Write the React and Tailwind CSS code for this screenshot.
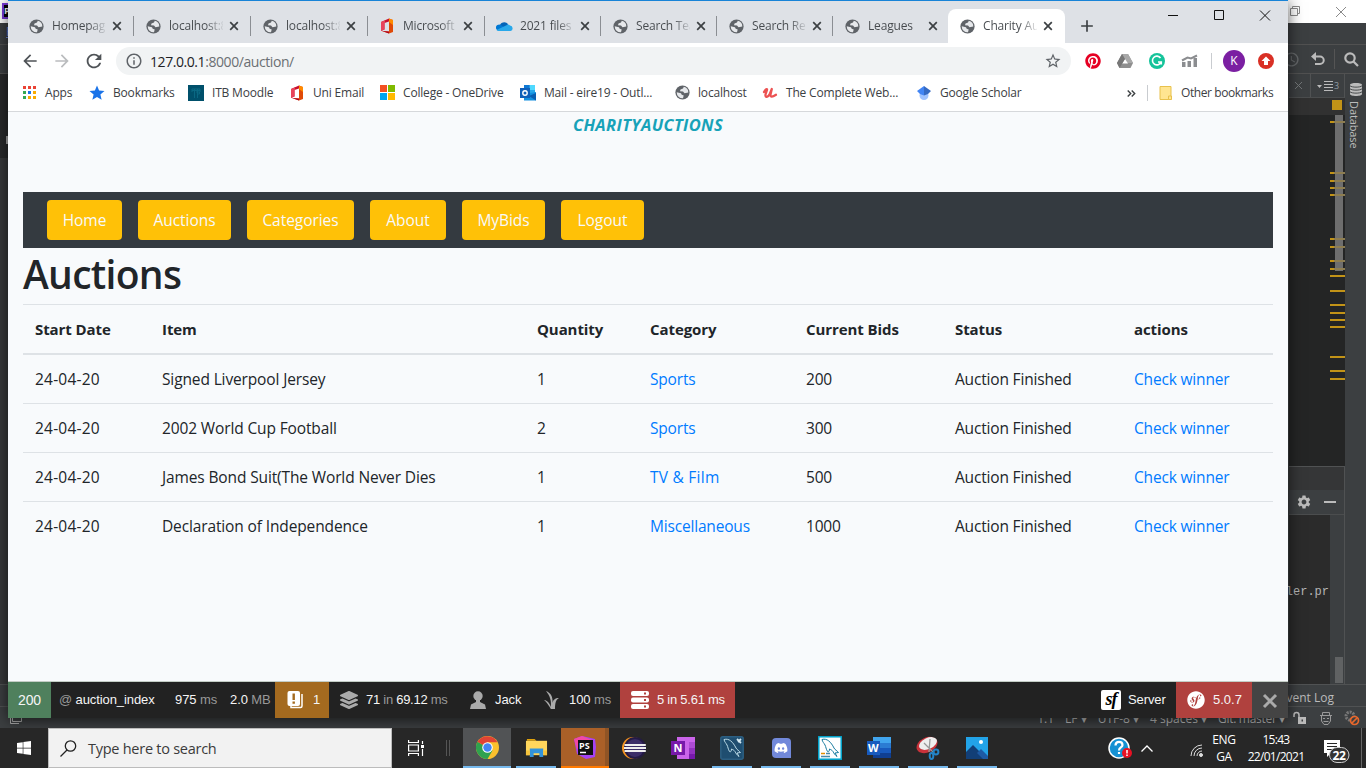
import React from "react";
import {
  MdArrowBack, MdArrowForward, MdRefresh, MdInfoOutline,
  MdStarBorder, MdStar, MdAdd, MdSettings, MdAccessTime,
} from "react-icons/md";
import { FaPinterest, FaDiscord, FaSymfony, FaLayerGroup, FaWindows } from "react-icons/fa";

/* ---------- small drawings ---------- */
const Globe = () => (
  <svg className="size-[15px] shrink-0" viewBox="0 0 15 15">
    <circle cx="7.500" cy="7.500" r="7.100" fill="#5f6368" />
    <path d="M8.800 1.800 8 3.500 5.500 4.500 5 6.300l3 .2 1.500 1.700 3.800-.7a5.800 5.800 0 0 0-4.500-5.700zM1.700 7.300l4.300.9.700 1.500 2 .8-.7 2.800a5.900 5.900 0 0 1-6.300-6z" fill="#e6e8eb" />
  </svg>
);

const Cross = ({ className = "" }) => (
  <svg className={`size-[10px] shrink-0 ${className}`} viewBox="0 0 10 10" fill="none" stroke="currentColor" strokeWidth="1.700">
    <path d="m1.200 1.200 7.600 7.600M8.800 1.200 1.200 8.800" />
  </svg>
);

const Office = () => (
  <svg className="h-4 w-4 shrink-0" viewBox="0 0 16 16">
    <path d="M2 4 10 .5v3L5.500 5v6.500L2 13z" fill="#c8102e" />
    <path d="M2 4 6 2.200v2.600L5.500 5v6.500L2 13z" fill="#e8445a" />
    <path d="M10 .5 14 2v12l-4 1.500-7-2.500 7 .6z" fill="#e04a08" />
    <path d="M10 .5 14 2v5l-4-3z" fill="#ff8a00" />
    <path d="m3 13 7 .6v1.900z" fill="#b00020" />
  </svg>
);

const Cloud = () => (
  <svg className="h-4 w-[17px] shrink-0" viewBox="0 0 17 16">
    <path d="M3.500 8.500A4.800 4.800 0 0 1 12 6l-2 6H3z" fill="#0364b8" />
    <path d="M0 10.500A3.300 3.300 0 0 1 5 7l8 5.500H3A3 3 0 0 1 0 10.500z" fill="#0078d4" />
    <path d="M8 8.500 12 6.500a4 4 0 0 1 2 1A2.800 2.800 0 0 1 14.500 13H3a3 3 0 0 1-2.500-1z" fill="#28a8ea" />
  </svg>
);

const Tiles = () => (
  <div className="grid size-[15px] grid-cols-2 gap-px">
    <i className="bg-[#f25022]" /><i className="bg-[#7fba00]" /><i className="bg-[#00a4ef]" /><i className="bg-[#ffb900]" />
  </div>
);

const AppsGrid = () => (
  <svg className="size-4" viewBox="0 0 16 16">
    <path d="M2 1h3v3H2zM7 1h3v3H7zM12 1h3v3h-3z" fill="#ea4335" />
    <path d="M2 6h3v3H2z" fill="#34a853" /><path d="M7 6h3v3H7z" fill="#1a73e8" /><path d="M12 6h3v3h-3z" fill="#f9ab00" />
    <path d="M2 11h3v3H2z" fill="#34a853" /><path d="M7 11h3v3H7zM12 11h3v3h-3z" fill="#f9ab00" />
  </svg>
);

const Moodle = () => (
  <svg className="size-4" viewBox="0 0 16 16">
    <path d="M0 0h16v16H0z" fill="#00506b" />
    <path d="M4 7V4h8v3M6.500 4v9M9.500 4v9M4 5.500h8M8 7h3.500v2H9.500" fill="none" stroke="#0b6b86" strokeWidth=".9" />
  </svg>
);

const Outlook = () => (
  <svg className="size-4" viewBox="0 0 16 16">
    <path d="M4 0h11v9H4z" fill="#28a8ea" /><path d="M9.500 0H15v5H9.500z" fill="#50d9ff" /><path d="M4 0h5.500v5H4z" fill="#0f78d4" />
    <path d="M4 9 16 7v8.500H4z" fill="#1490df" /><path d="m9 11 7 4.500V8z" fill="#0a5eb0" />
    <path d="M0 3h10v10H0z" fill="#0f5fb8" /><circle cx="5" cy="8" r="2.200" fill="none" stroke="#fff" strokeWidth="1.400" />
  </svg>
);

const Udemy = () => (
  <svg className="size-4 overflow-visible" viewBox="0 0 16 16">
    <path d="M2 7C3.500 4.500 5.500 3 5 5L3.500 9.500C3 13 6 12.500 8 8.500L9.800 4 8.500 9.500c-.3 3 2 2.500 5.500.3" fill="none" stroke="#ec5252" strokeWidth="2.300" strokeLinecap="round" strokeLinejoin="round" />
  </svg>
);

const Scholar = () => (
  <svg className="size-4" viewBox="0 0 16 16">
    <circle cx="8" cy="10.500" r="4.500" fill="#a0c3ff" /><path d="M1 6 8 1v9.500L4 9z" fill="#4285f4" />
    <path d="m15 6-7-5v9.500L12 9z" fill="#356ac3" />
  </svg>
);

const Folder = () => (
  <svg className="size-4" viewBox="0 0 16 16">
    <path d="M2 1.500h11v13H2z" fill="#ffe591" stroke="#e8c14c" /><path d="M10.500 11h3v3.500h-3z" fill="#ffe591" stroke="#e8c14c" />
  </svg>
);

/* ---------- browser window ---------- */
const tabs = [
  ["Homepage", Globe, "w-[117px]"], ["localhost:8", Globe, "w-[117px]"], ["localhost:8", Globe, "w-[117px]"],
  ["Microsoft", Office, "w-[117px]"], ["2021 files", Cloud, "w-[116px]"], ["Search Tea", Globe, "w-[116px]"],
  ["Search Res", Globe, "w-[116px]"], ["Leagues", Globe, "w-[115px]"], ["Charity Au", Globe, "w-[117px]"],
];

function TabStrip() {
  return (
    <div className="flex h-[42px] bg-[#dee1e6] pl-[9px]">
      {tabs.map(([name, Icon, w], i) => {
        const active = i === tabs.length - 1;
        return (
          <div key={i} className={`mt-2 flex h-[34px] shrink-0 items-center pl-[11px] ${w} ${active ? "rounded-t-lg bg-white" : ""}`}>
            <div className="flex w-4 justify-center"><Icon /></div>
            <span className={`ml-2 w-[54px] overflow-hidden whitespace-nowrap bg-gradient-to-r from-[#45494d] bg-clip-text text-[12px] tracking-[-0.180px] text-transparent ${name === "Leagues" ? "to-[#45494d]" : "from-68% to-[#45494d]/10"}`}>{name}</span>
            <Cross className="ml-[6px] text-[#3c4043]" />
            {i < 7 && <i className="ml-auto h-5 w-px bg-[#8b8e93]" />}
          </div>
        );
      })}
      <MdAdd className="ml-[12px] mt-[15px] size-5 text-[#3c4043]" />
      <svg className="ml-auto h-[30px] w-[136px]" viewBox="0 0 136 30" fill="none" stroke="#111" strokeWidth="1">
        <path d="M16 14.500h10M62.500 9.500h9v9h-9zM108 9.500l10 10M118 9.500l-10 10" />
      </svg>
    </div>
  );
}

function AddressBar() {
  return (
    <div className="flex h-[36px] items-center bg-white pl-[12px] pr-[12px]">
      <MdArrowBack className="size-[20px] text-[#4f5357]" />
      <MdArrowForward className="ml-[12px] size-[20px] text-[#babcbe]" />
      <MdRefresh className="ml-[11px] size-[22px] text-[#4f5357]" />
      <div className="ml-[11px] flex h-7 w-[955px] items-center rounded-full bg-[#f1f3f4] pl-[9px] pr-[9px] text-[14px] tracking-[-0.430px]">
        <MdInfoOutline className="size-[18px] text-[#5f6368]" />
        <span className="ml-[7px] text-[#202124]">127.0.0.1<span className="text-[#6b6f73]">:8000/auction/</span></span>
        <MdStarBorder className="ml-auto size-[18px] text-[#5f6368]" />
      </div>
      <FaPinterest className="ml-[14px] size-4 text-[#e60023]" />
      <svg className="ml-4 size-4" viewBox="0 0 16 16">
        <path d="M5 1h6l5 9-2.500 5h-11L0 10z" fill="#8f8f8f" /><path d="M11 1 16 10H10L5 1z" fill="#a8a8a8" /><path d="m8 6 3 4.500H5z" fill="#fff" /><path d="M5 1 0 10l2.500 5L8 6z" fill="#777" />
      </svg>
      <svg className="ml-4 size-4" viewBox="0 0 16 16">
        <circle cx="8" cy="8" r="8" fill="#15c39a" /><path d="M11.500 5A4.400 4.400 0 1 0 12 9H9M10 9h2.300v2.500" fill="none" stroke="#fff" strokeWidth="1.600" />
      </svg>
      <svg className="ml-4 h-4 w-[17px]" viewBox="0 0 17 16" fill="#8b8d90">
        <path d="M1 9h3.500v5H1zM6.500 8H10v6H6.500zM12.500 5H16v9h-3.500z" /><path d="M1 7.500 6.500 4.500l3.500 1L16 2.500" fill="none" stroke="#8b8d90" strokeWidth="2" />
      </svg>
      <i className="ml-[13px] h-4 w-px bg-[#c9ccd0]" />
      <span className="ml-[11px] flex size-[22px] items-center justify-center rounded-full bg-[#7b1fa2] text-[12px] text-white">K</span>
      <svg className="ml-[13px] size-4" viewBox="0 0 16 16">
        <circle cx="8" cy="8" r="8" fill="#d93025" /><path d="m8 3.500 4.500 4.500H10v4H6V8H3.500z" fill="#fff" />
      </svg>
    </div>
  );
}

const Star = () => <MdStar className="size-[18px] shrink-0 text-[#1a73e8]" />;
const bookmarks = [
  ["Apps", AppsGrid, "w-[68px]"], ["Bookmarks", Star, "w-[99px]"], ["ITB Moodle", Moodle, "w-[101px]"],
  ["Uni Email", Office, "w-[90px]"], ["College - OneDrive", Tiles, "w-[141px]"], ["Mail - eire19 - Outl...", Outlook, "w-[154px]"],
  ["localhost", Globe, "w-[88px]"], ["The Complete Web...", Udemy, "w-[154px]"], ["Google Scholar", Scholar, "w-[180px]"],
];

function BookmarkBar() {
  return (
    <div className="flex h-[33px] items-center border-b border-[#d6d8db] bg-white pb-[4px] pl-[13px] text-[12px] tracking-[-0.18px] text-[#3c4043]">
      {bookmarks.map(([name, Icon, w]) => (
        <div key={name} className={`flex shrink-0 items-center gap-2 whitespace-nowrap ${w}`}>
          <div className="flex w-4 shrink-0 justify-center pb-px"><Icon /></div>{name}
        </div>
      ))}
      <svg className="ml-[31px] mr-[11px] h-[7px] w-[9px]" viewBox="0 0 9 7" fill="none" stroke="#3c4043" strokeWidth="1.400"><path d="m.7.5 3 3-3 3M4.700.5l3 3-3 3" /></svg>
      <i className="h-4 w-px bg-[#c9ccd0]" />
      <div className="ml-[10px] flex items-center gap-[7px] whitespace-nowrap tracking-[-0.420px]"><Folder />Other bookmarks</div>
    </div>
  );
}

const nav = [["Home", "w-[75px]"], ["Auctions", "w-[93px]"], ["Categories", "w-[107px]"], ["About", "w-[76px]"], ["MyBids", "w-[83px]"], ["Logout", "w-[83px]"]];
const rows = [
  ["24-04-20", "Signed Liverpool Jersey", "1", "Sports", "200", "Auction Finished", "Check winner"],
  ["24-04-20", "2002 World Cup Football", "2", "Sports", "300", "Auction Finished", "Check winner"],
  ["24-04-20", "James Bond Suit(The World Never Dies", "1", "TV & Film", "500", "Auction Finished", "Check winner"],
  ["24-04-20", "Declaration of Independence", "1", "Miscellaneous", "1000", "Auction Finished", "Check winner"],
];
const grid = "grid grid-cols-[127px_375px_113px_156px_149px_179px_151px] items-center";

function Page() {
  return (
    <main className="h-[570px] border-b border-[#c3cdc5] bg-[#f8fafc] px-[15px] text-[#212529]">
      <div className="h-[80px] text-center text-[16.500px] font-bold italic leading-[25px] tracking-[0.370px] text-[#17a2b8]">CHARITYAUCTIONS</div>
      <nav className="flex h-14 items-center gap-4 bg-[#343a40] pl-6">
        {nav.map(([n, w]) => (
          <a key={n} className={`flex h-10 items-center justify-center rounded bg-[#ffc107] pt-px text-[15.500px] tracking-[-0.050px] text-[#f8f9fa] ${w}`}>{n}</a>
        ))}
      </nav>
      <h1 className="h-14 text-[39px] font-semibold leading-[52px] tracking-[-0.700px]">Auctions</h1>
      <div className="text-[15.500px] tracking-[-0.180px]">
        <div className={`${grid} h-[51px] border-b-2 border-t border-[#dee2e6] text-[15px] font-bold tracking-[-0.080px]`}>
          {["Start Date", "Item", "Quantity", "Category", "Current Bids", "Status", "actions"].map((h) => <span key={h} className="pl-3">{h}</span>)}
        </div>
        {rows.map((r, i) => (
          <div key={i} className={`${grid} h-[49px] border-b pt-[2px] ${i < 3 ? "border-[#dee2e6]" : "border-transparent"}`}>
            {r.map((c, j) => <span key={j} className={`pl-3 ${j === 3 || j === 6 ? "text-[#007bff]" : ""} ${j === 0 ? "tracking-[0.200px]" : c === "TV & Film" ? "tracking-[0.250px]" : j === 1 ? "tracking-[-0.130px]" : ""}`}>{c}</span>)}
          </div>
        ))}
      </div>
    </main>
  );
}

const Dim = ({ children }) => <span className="text-[#999]">{children}</span>;

function DebugBar() {
  return (
    <footer className="flex h-9 items-stretch whitespace-pre bg-[#222] font-['Liberation_Sans',sans-serif] text-[13px] tracking-[-0.100px] text-[#f5f5f5] *:flex *:items-center">
      <div className="w-[43px] justify-center bg-[#4f805d] text-[14px]">200</div>
      <div className="w-[124px] pl-2"><Dim>@ </Dim>auction_index</div>
      <div className="w-[55px]">975<Dim> ms</Dim></div>
      <div className="w-[45px]">2.0<Dim> MB</Dim></div>
      <div className="w-[54px] bg-[#a46a1f] pl-3">
        <svg className="mr-[8px] size-[18px]" viewBox="0 0 17 18"><path d="M3.500 15v1.500H13a1.500 1.500 0 0 0 1.500-1.500V3" fill="none" stroke="#fff" strokeWidth="1.500" /><rect width="12.500" height="15" rx="2" fill="#fff" /><path d="M6.200 2.500v6.500M6.200 10.500v2.200" stroke="#a46a1f" strokeWidth="2.400" /></svg>1
      </div>
      <div className="w-[141px] pl-[11px] tracking-[-0.270px]"><FaLayerGroup className="mr-[8px] size-[18px] text-[#aaa]" />71<Dim> in </Dim>69.12<Dim> ms</Dim></div>
      <div className="w-[74px]">
        <svg className="mr-[9px] h-[18px] w-4" viewBox="0 0 16 18" fill="#aaa"><circle cx="8" cy="5" r="4.700" /><path d="M6 8h4v3l5 2.500 1 4.500H0l1-4.500L6 11z" /></svg>Jack
      </div>
      <div className="w-[76px]">
        <svg className="mr-[9px] h-[18px] w-4" viewBox="0 0 16 18" fill="#aaa"><path d="M2 0c5 2 7 6 6.500 12C9 9 11 7 15 7c-3 1.500-4 5-4 11H6.500C8 10 6 5 2 0zM0 9c4 .5 6 4 7.500 9C5 16 4 12 0 9z" /></svg>100<Dim> ms</Dim>
      </div>
      <div className="w-[115px] bg-[#b0413e] pl-[11px] tracking-[-0.250px]">
        <svg className="mr-2 size-[18px]" viewBox="0 0 18 18"><g fill="#fff"><rect width="18" height="5" rx="2" /><rect y="6.500" width="18" height="5" rx="2" /><rect y="13" width="18" height="5" rx="2" /></g><path d="M13 2.500h2M13 9h2M13 15.500h2" stroke="#b0413e" strokeWidth="2" /></svg>5 in 5.61 ms
      </div>
      <div className="ml-auto w-[75px]">
        <span className="mr-[7px] flex h-5 w-5 items-center justify-center rounded-[2px] bg-white pb-[3px] font-['Liberation_Serif',serif] text-[18px] font-bold italic leading-none tracking-[-1px] text-black">sf</span>Server
      </div>
      <div className="w-[76px] bg-[#b0413e] pl-[11px] tracking-normal"><FaSymfony className="mr-2 size-[18px] text-white" />5.0.7</div>
      <div className="w-9 justify-center bg-[#444]"><svg className="mt-0.5 size-4" viewBox="0 0 16 16"><path d="m2 2 12 12M14 2 2 14" stroke="#aaa" strokeWidth="3" /></svg></div>
    </footer>
  );
}

function Browser() {
  return (
    <section className="absolute left-2 top-0 flex h-[718px] w-[1280px] flex-col border-t border-[#1883d7] bg-white shadow-[0_2px_14px_rgba(0,0,0,0.65)]">
      <TabStrip />
      <AddressBar />
      <BookmarkBar />
      <Page />
      <DebugBar />
    </section>
  );
}

/* ---------- editor behind the browser ---------- */
const marks = [[121, 1], [172, 1], [180, 1], [187, 1], [194, 1], [238, 1], [246, 1], [260, 1], [268, 1], [275, 0], [290, 0], [304, 0], [312, 0], [319, 0], [326, 0], [356, 0], [370, 0], [378, 0]];

function Editor() {
  return (
    <section className="flex h-[728px] w-[1366px] flex-col bg-[#3c3f41] text-[#bbb]">
      <div className="flex h-[23px] items-center justify-between bg-white">
        <span className="mb-px ml-[2px] flex size-4 border-2 border-[#7a3bd8] bg-black text-[9px] font-bold leading-3 text-white">P</span>
        <svg className="h-5 w-[78px]" viewBox="0 0 78 20" fill="none" stroke="#8a8a8a"><path d="M2.500 6.500h7v7h-7zM4.500 6v-1.500h7v7H10M48 5l10 10M58 5 48 15" /></svg>
      </div>
      <div className="h-[22px] border-b border-[#515151] pl-1.5 text-[12px] text-[#6d86d8] underline">F</div>
      <div className="flex h-[29px] items-center justify-end border-b border-[#515151] pr-[7px]">
        <MdAccessTime className="mr-[11px] size-[17px] text-[#65686a]" />
        <svg className="mr-[9px] h-[14px] w-[14px]" viewBox="0 0 14 14"><path d="M0 4.500 5 0v9z" fill="#bbb" /><path d="M4 4.500h5a3.700 3.700 0 0 1 0 7.500H4" fill="none" stroke="#bbb" strokeWidth="2" /></svg>
        <i className="mr-[9px] h-5 w-px bg-[#555]" />
        <svg className="size-[15px]" viewBox="0 0 15 15" fill="none" stroke="#bbb" strokeWidth="2.200"><circle cx="6" cy="6" r="4.700" /><path d="m9.500 9.500 4.500 4.500" /></svg>
      </div>
      <div className="flex h-[610px]">
        <div className="h-full w-2 bg-[#38393b]"><div className="h-[84px] bg-[#292a2b] pt-[62px]"><i className="ml-1.5 block h-2 w-0.5 bg-[#aaa]" /></div></div>
        <div className="ml-auto flex w-[56px] flex-col border-r border-[#505253]">
          <div className="flex h-[24px] items-center border-b border-[#4b4d4e]">
            <svg className="ml-[5px] size-[9px]" viewBox="0 0 9 9" stroke="#737678"><path d="m1 1 7 7M8 1 1 8" /></svg><i className="ml-[7px] h-full w-px bg-[#505253]" />
            <svg className="ml-[6px] h-3 w-[17px] shrink-0" viewBox="0 0 17 12" fill="#bbb"><path d="M0 5h5L2.500 8zM7 1h9v1H7zM7 4h9v1H7zM7 7h9v1H7zM7 10h9v1H7z" /></svg><span className="text-[9px] text-[#8f9ba3]">3</span>
          </div>
          <svg className="h-[368px] w-[56px] shrink-0" viewBox="1289 98 56 368">
            <path d="M1288 98h57v368h-57z" fill="#242525" /><path d="M1288 98h57v17h-57z" fill="#313131" /><path d="M1332 100h10v10h-10z" fill="#c29317" />
            {marks.map(([y]) => <path key={y} d={`M1330 ${y}h15v2h-15z`} fill="#c29317" />)}
            <path d="M1335 115h8v156h-8z" fill="#6e6e6e" />
            {marks.filter((m) => m[1]).map(([y]) => <path key={y} d={`M1334 ${y}h11v2h-11z`} fill="#8d7d51" />)}
          </svg>
          <div className="h-[24px] border-t border-[#505253] bg-[#353637]" />
          <div className="flex h-[25px] items-center border-b border-[#4b4d4e]"><MdSettings className="ml-[7px] size-4" /><i className="ml-[12px] h-0.5 w-3 bg-[#bbb]" /></div>
          <div className="flex h-[169px] w-full">
            <div className="flex w-[41px] shrink-0 items-start justify-end bg-[#2b2b2b] pr-px pt-[69px] font-['Liberation_Mono',monospace] text-[12px] leading-[16px] text-[#b5b5b5]">ler.pr</div>
            <div className="flex flex-1 items-end pl-[5px]"><i className="mb-px h-[26px] w-2 bg-[#606263]" /></div>
          </div>
        </div>
        <div className="flex w-[21px] flex-col items-center pt-[9px]">
          <svg className="h-[13px] w-3" viewBox="0 0 12 13" fill="#bbb"><path d="M0 2c0-2.600 12-2.600 12 0v9c0 2.600-12 2.600-12 0z" /><path d="M0 2.800c2 1.800 10 1.800 12 0M0 5.800c2 1.800 10 1.800 12 0M0 8.800c2 1.800 10 1.800 12 0" fill="none" stroke="#3c3f41" strokeWidth=".9" /></svg>
          <span className="mr-[3px] mt-[5px] text-[11px] leading-[18px] tracking-[-0.100px] [writing-mode:vertical-rl]">Database</span>
        </div>
      </div>
      <div className="flex h-[22px] items-center justify-end border-t border-[#505253] pr-8 pt-1 text-[12px]">Event Log</div>
      <div className="flex h-[22px] items-center justify-end border-t border-[#505253] text-[12px]">
        <svg className="ml-[9px] mr-auto size-4" viewBox="0 0 16 16" fill="none" stroke="#aaa"><path d="M3.500 2.500h9v9h-9zM1.500 5v8.500H10" /></svg>
        <div className="-mr-1 flex gap-[11px] pt-[3px] leading-4">
          <span>1:1</span><span>LF ▾</span><span>UTF-8 ▾</span><span>4 spaces ▾</span><span className="tracking-tight">Git: master ▾</span>
        </div>
        <svg className="ml-[13px] h-3 w-3 overflow-visible" viewBox="0 0 12 12"><path d="M4 5h8v7H4z" fill="#bbb" /><path d="M0 5V3a2.500 2.500 0 0 1 5 0v2" fill="none" stroke="#bbb" strokeWidth="1.500" /><path d="M7.500 7.500h1.500v2H7.500z" fill="#3c3f41" /></svg>
        <svg className="ml-[14px] h-[14px] w-3" viewBox="0 0 12 14" fill="none" stroke="#999"><path d="M2.500 4V1.500h7V4M0 4.500h12M1.500 5v5l2.500 3.500h4L10.500 10V5M3 7.500h2M7 7.500h2M3.500 10.500h5" /></svg>
        <svg className="ml-[12px] mr-[6px] size-4" viewBox="0 0 16 16" fill="none"><circle cx="6" cy="6" r="4" stroke="#777" strokeWidth="3" strokeDasharray="2 1" /><circle cx="10.500" cy="10.500" r="4" stroke="#e8682c" strokeWidth="1.700" fill="#3c3f41" /><path d="m8 13 5-5" stroke="#e8682c" strokeWidth="1.700" /></svg>
      </div>
    </section>
  );
}

/* ---------- taskbar ---------- */
const Chrome = () => (
  <svg className="size-[23px]" viewBox="0 0 24 24"><circle cx="12" cy="12" r="12" fill="#fbc02d" /><path d="M12 12 1.600 6A12 12 0 0 0 12 24l5.200-9z" fill="#2fa24f" /><path d="M12 12 1.600 6A12 12 0 0 1 22.400 6.500H12z" fill="#e04335" /><circle cx="12" cy="12" r="5.500" fill="#fff" /><circle cx="12" cy="12" r="4.400" fill="#4285f4" /></svg>
);
const Explorer = () => (
  <svg className="size-[23px]" viewBox="0 0 24 24"><path d="M2 3h8l2 2H2z" fill="#e0a20c" /><path d="M1 5h22v15H1z" fill="#ffd65c" /><path d="M5 22v-9h14v9h-4v-4H9v4z" fill="#3293d9" /><path d="M1 15h4v5H1zM19 15h4v5h-4z" fill="#f5c33b" /></svg>
);
const PhpStorm = () => (
  <svg className="size-6" viewBox="0 0 24 24"><path d="M1 3 9 0l13 3 1 8-1 10-9 2-9-5z" fill="#a542f4" /><path d="m1 3 8-3 10 4-15 9z" fill="#f249a5" /><path d="M5 4h15v15H5z" fill="#111" /><path d="M7 16.500h6" stroke="#fff" strokeWidth="1.500" /><text x="6" y="12.500" fontSize="9" fontWeight="bold" fill="#fff">PS</text></svg>
);
const Eclipse = () => (
  <svg className="size-6" viewBox="0 0 24 24"><circle cx="11" cy="12" r="11" fill="#f7941e" /><circle cx="13" cy="12" r="11" fill="#241b44" /><circle cx="13" cy="12" r="9" fill="#3b2d68" /><path d="M2.500 9h21.300M2 12h22M2.500 15h21.300" stroke="#eee" strokeWidth="1.800" /></svg>
);
const OneNote = () => (
  <svg className="size-6" viewBox="0 0 24 24"><path d="M6 1h18v22H6z" fill="#ca64ea" /><path d="M18 6h6v6h-6z" fill="#ae4bd5" /><path d="M18 12h6v6h-6z" fill="#9332bf" /><path d="M18 18h6v5h-6z" fill="#7719aa" /><path d="M0 5h14v14H0z" fill="#7719aa" /><text x="2.500" y="16" fontSize="11" fontWeight="bold" fill="#fff">N</text></svg>
);
const Dolphin = ({ light }) => (
  <svg className="size-6" viewBox="0 0 24 24"><rect x=".8" y=".8" width="22.400" height="22.400" rx={light ? 0 : 2} fill={light ? "#fff" : "#1f4e70"} stroke={light ? "#00a6cf" : "#2c5f82"} strokeWidth="1.500" /><path d="M4 3.500C9 2 13 6 16 12c1 2 3 2.500 4.500 4.500L17 17l2 3.500c-2-1.500-3-3-4-5-1-1.500-2.500-2-3.500-2.500 0 2-1 3.500-2 2.500C8 13 8 11 7 9 6 7 4.500 6 4 3.500z" fill="none" stroke={light ? "#187ca0" : "#bbdbe7"} />{light ? <><path d="M3 17.500h4" stroke="#e48e00" strokeWidth="1.500" /><path d="M8 17.500h4M3 20.500h9" stroke="#4a89a8" strokeWidth="1.500" /></> : <path d="m17 3 4 4m0-4-3 3" stroke="#d5e9f1" strokeWidth="1.800" />}</svg>
);
const Discord = () => <span className="flex h-5 w-[19px] items-center justify-center rounded-[4px] rounded-br-none bg-[#7289da] text-white"><FaDiscord className="size-[14px]" /></span>;
const Word = () => (
  <svg className="size-6" viewBox="0 0 24 24"><path d="M6 1h18v6H6z" fill="#41a5ee" /><path d="M6 7h18v5H6z" fill="#2b7cd3" /><path d="M6 12h18v5H6z" fill="#185abd" /><path d="M6 17h18v5H6z" fill="#103f91" /><path d="M0 5h13v14H0z" fill="#185abd" /><text x="1" y="16" fontSize="11" fontWeight="bold" fill="#fff">W</text></svg>
);
const Snip = () => (
  <svg className="size-6" viewBox="0 0 24 24"><ellipse cx="11" cy="9" rx="11" ry="7.500" fill="#c9323a" transform="rotate(-25 11 9)" /><ellipse cx="12" cy="7.500" rx="9.500" ry="5.500" fill="#eee" transform="rotate(-25 12 7.500)" /><path d="m8 7 9 9M14 3l-1 13" stroke="#999" strokeWidth="1.300" /><g fill="none" stroke="#2384c6" strokeWidth="2"><circle cx="20" cy="16" r="2.400" /><ellipse cx="15.500" cy="20" rx="1.800" ry="3" /></g></svg>
);
const Photos = () => (
  <svg className="size-[22px]" viewBox="0 0 22 22"><path d="M0 0h22v22H0z" fill="#22a3e8" /><circle cx="15" cy="5" r="2" fill="#fff" /><path d="M0 15 7 8l14 14H0z" fill="#123f77" /><path d="m11 16 4-4 7 7v3H17z" fill="#1d5aa5" /></svg>
);
const apps = [Chrome, Explorer, PhpStorm, Eclipse, OneNote, Dolphin, Discord, () => <Dolphin light />, Word, Snip, Photos];

function Taskbar() {
  return (
    <footer className="flex h-10 items-center bg-[#272727] text-white">
      <div className="flex w-12 justify-center"><FaWindows className="size-4" /></div>
      <div className="flex h-10 w-[344px] items-center border border-[#bcbcbc] bg-[#f2f2f2] pl-[11px] text-[14.500px] tracking-[-0.260px] text-[#3b3b3b]">
        <svg className="mr-[11px] size-[17px]" viewBox="0 0 17 17" fill="none" stroke="#222" strokeWidth="1.300"><circle cx="10.500" cy="6" r="5.200" /><path d="M7 10 .5 16.500" /></svg>
        <span className="pt-[2px]">Type here to search</span>
      </div>
      <svg className="ml-4 h-4 w-4" viewBox="0 0 16 16" fill="none" stroke="#fff" strokeWidth="1.200"><path d="M.6 0v2.500h9.800V0M.6 5h9.800v6H.600zM.6 16v-2.500h9.800V16M14.500 1v3M14.500 9v7" /><path d="M13 5h3v3h-3z" fill="#fff" stroke="none" /></svg>
      <div className="ml-[22px] h-4 w-1 border-x border-[#555]" />
      <div className="ml-[13px] flex gap-px">
        {apps.map((Icon, i) => (
          <div key={i} className={`flex h-10 w-12 flex-col items-center ${i === 0 ? "bg-[#515355]" : i === 2 ? "bg-[linear-gradient(to_right,#aa6028_44px,#8f5425_44px)]" : ""}`}>
            <div className="flex h-[38px] items-center pt-px"><Icon /></div>
            {i !== 3 && i !== 4 && <i className={`h-0.5 shrink-0 ${i === 2 ? "w-12 bg-[#ff7a00]" : i === 0 ? "w-12 bg-[#76b9ed]" : "w-10 bg-[#76b9ed]"}`} />}
          </div>
        ))}
      </div>
      <svg className="ml-auto h-[22px] w-6" viewBox="0 0 24 22"><circle cx="11" cy="11" r="10" fill="#1591d3" stroke="#fff" strokeWidth="1.500" /><path d="M7.500 8.500c0-5 7-4.500 7-.5 0 2.500-3.500 2.500-3.500 5.500M11 15v2" fill="none" stroke="#fff" strokeWidth="2.200" /><circle cx="19" cy="16" r="5" fill="#e81123" /><path d="M19 13v3.500M19 17.500v1.500" stroke="#fff" strokeWidth="1.500" /></svg>
      <svg className="ml-[9px] h-[7px] w-3" viewBox="0 0 12 7" fill="none" stroke="#fff" strokeWidth="1.300"><path d="m.5 6.500 5.500-5.500 5.500 5.500" /></svg>
      <svg className="ml-[37px] mt-1 h-3 w-3 overflow-visible" viewBox="0 0 12 12" fill="none" stroke="#ddd" strokeWidth="1"><path d="M1 12A11 11 0 0 1 12 1M4 12a8 8 0 0 1 8-8M7 12a5 5 0 0 1 5-5" /><circle cx="11" cy="11" r="1.500" fill="#ddd" /></svg>
      <div className="ml-[8px] w-[28px] text-center text-[12px] leading-[17px] tracking-[-0.300px]">ENG<br />GA</div>
      <div className="ml-[6px] w-[64px] whitespace-nowrap text-center text-[12px] leading-[17px] tracking-[-0.700px]">15:43<br />22/01/2021</div>
      <svg className="ml-[15px] mt-1.5 h-[25px] w-[27px] shrink-0" viewBox="0 0 27 25"><path d="M1 1h16v13H8l-4 4v-4H1z" fill="#fff" /><path d="M4 4.500h10M4 7.500h10M4 10.500h10" stroke="#272727" /><rect x="6.500" y="8.500" width="19.500" height="15" rx="7.500" fill="#333" stroke="#ccc" /><text x="9.500" y="20.500" fontSize="12" fontWeight="bold" letterSpacing="-.3" fill="#fff">22</text></svg>
      <i className="ml-[11px] mr-1 h-10 w-px bg-[#666]" />
    </footer>
  );
}

export default function App() {
  return (
    <div className="relative h-[768px] w-[1366px] overflow-hidden font-['Open_Sans','Noto_Sans',sans-serif]">
      <Editor />
      <Browser />
      <div className="relative"><Taskbar /></div>
    </div>
  );
}
